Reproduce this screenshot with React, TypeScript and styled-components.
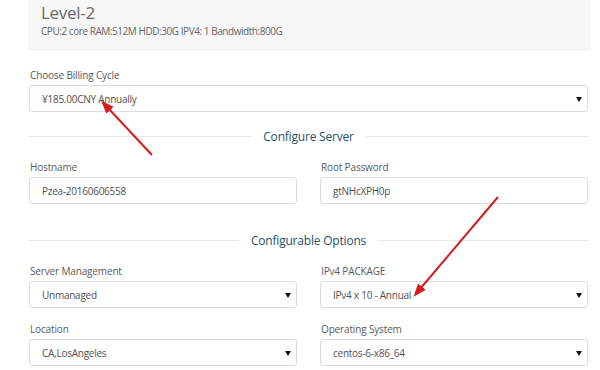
import React from "react";
import styled, { createGlobalStyle } from "styled-components";

const Global = createGlobalStyle`
  html, body { margin: 0; padding: 0; background: #fff; }
  body { font-family: "Open Sans", "Noto Sans", sans-serif; }
  * { box-sizing: border-box; }
`;

const Page = styled.div`
  position: relative;
  width: 600px;
  height: 370px;
  overflow: hidden;
  background: #fff;
`;

const Header = styled.div`
  margin: 0 10px 0 28px;
  height: 50px;
  background: #f7f7f7;
  border-bottom: 1px solid #efefef;
  padding: 2px 13px 0;
`;

const Title = styled.div`
  font-size: 17px;
  line-height: 22px;
  color: #6a6a6a;
  letter-spacing: -0.3px;
`;

const Specs = styled.div`
  font-size: 10px;
  line-height: 14px;
  color: #666;
  letter-spacing: -0.45px;
`;

const Form = styled.div`
  padding: 18px 12px 0 29px;
  display: flex;
  flex-direction: column;
`;

const Row = styled.div<{ $mt?: number }>`
  display: grid;
  grid-template-columns: 268px 268px;
  column-gap: 23px;
  margin-top: ${(p) => p.$mt ?? 0}px;
`;

const Group = styled.div<{ $mt?: number }>`
  display: flex;
  flex-direction: column;
  margin-top: ${(p) => p.$mt ?? 0}px;
`;

const Label = styled.div`
  font-size: 10px;
  line-height: 14px;
  color: #5a5a5a;
  margin-bottom: 3px;
  padding-left: 1px;
  letter-spacing: -0.15px;
`;

const Field = styled.div`
  position: relative;
  height: 27px;
  border: 1px solid #dcdcdc;
  border-radius: 3px;
  background: #fff;
  display: flex;
  align-items: center;
  padding: 0 24px 0 12px;
  font-size: 10px;
  letter-spacing: -0.25px;
  color: #505050;
`;

const Caret = styled.span`
  position: absolute;
  right: 5px;
  top: 11px;
  width: 0;
  height: 0;
  border-left: 3px solid transparent;
  border-right: 3px solid transparent;
  border-top: 5px solid #111;
`;

const Divider = styled.div<{ $mt: number }>`
  display: flex;
  align-items: center;
  height: 20px;
  margin-top: ${(p) => p.$mt}px;
  &::before, &::after {
    content: "";
    flex: 1;
    height: 1px;
    background: #e6e6e6;
  }
`;

const DividerText = styled.span`
  padding: 0 12px;
  font-size: 12px;
  color: #27506a;
  white-space: nowrap;
  letter-spacing: -0.2px;
`;

const Overlay = styled.svg`
  position: absolute;
  left: 0;
  top: 0;
  pointer-events: none;
`;

const Select = ({ value }: { value: string }) => (
  <Field>
    {value}
    <Caret />
  </Field>
);

export default function App() {
  return (
    <Page>
      <Global />
      <Header>
        <Title>Level-2</Title>
        <Specs>CPU:2 core RAM:512M HDD:30G IPV4: 1 Bandwidth:800G</Specs>
      </Header>
      <Form>
        <Group>
          <Label>Choose Billing Cycle</Label>
          <Select value="¥185.00CNY Annually" />
        </Group>
        <Divider $mt={14}>
          <DividerText>Configure Server</DividerText>
        </Divider>
        <Row $mt={14}>
          <Group>
            <Label>Hostname</Label>
            <Field>Pzea-20160606558</Field>
          </Group>
          <Group>
            <Label>Root Password</Label>
            <Field>gtNHcXPH0p</Field>
          </Group>
        </Row>
        <Divider $mt={26}>
          <DividerText>Configurable Options</DividerText>
        </Divider>
        <Row $mt={14}>
          <Group>
            <Label>Server Management</Label>
            <Select value="Unmanaged" />
            <Group $mt={14}>
              <Label>Location</Label>
              <Select value="CA,LosAngeles" />
            </Group>
          </Group>
          <Group>
            <Label>IPv4 PACKAGE</Label>
            <Select value="IPv4 x 10 - Annual" />
            <Group $mt={14}>
              <Label>Operating System</Label>
              <Select value="centos-6-x86_64" />
            </Group>
          </Group>
        </Row>
      </Form>
      <Overlay width="600" height="370" viewBox="0 0 600 370">
        <defs>
          <marker id="ah" markerWidth="13" markerHeight="10" refX="3" refY="5" orient="auto" markerUnits="userSpaceOnUse">
            <path d="M0,0 L13,5 L0,10 z" fill="#d41c1c" />
          </marker>
        </defs>
        <line x1="152" y1="155" x2="108" y2="108" stroke="#d41c1c" strokeWidth="2" markerEnd="url(#ah)" />
        <line x1="498" y1="197" x2="420" y2="289" stroke="#d41c1c" strokeWidth="2" markerEnd="url(#ah)" />
      </Overlay>
    </Page>
  );
}
